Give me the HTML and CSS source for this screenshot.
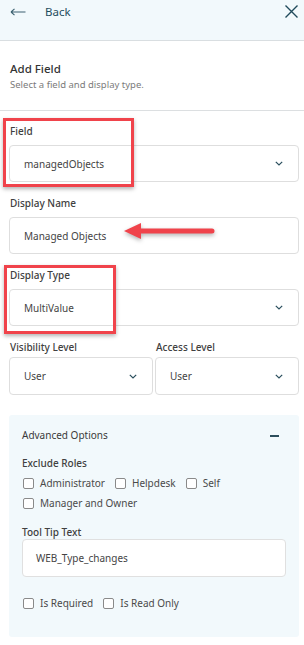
FILE: index.html
```html
<!DOCTYPE html>
<html>
<head>
<meta charset="utf-8">
<link rel="stylesheet" href="styles.css">
</head>
<body>
<div class="page">
  <header class="topbar">
    <div class="back">
      <svg class="back-arrow" width="16" height="10" viewBox="0 0 16 10"><path d="M1 5H15.5M1 5L4.5 1.8M1 5L4.5 8.2" fill="none" stroke="#3c6170" stroke-width="1.1"/></svg>
      <span class="back-text">Back</span>
    </div>
    <svg class="close" width="13" height="13" viewBox="0 0 13 13"><path d="M0.5 0.5L12.5 12.5M12.5 0.5L0.5 12.5" stroke="#1f4a5b" stroke-width="1.4"/></svg>
  </header>

  <section class="intro">
    <div class="title">Add Field</div>
    <div class="subtitle">Select a field and display type.</div>
  </section>

  <section class="form">
    <div class="group g-field">
      <div class="label">Field</div>
      <div class="control select"><span>managedObjects</span><svg class="chev" width="8" height="5" viewBox="0 0 8 5"><path d="M0.8 0.8L4 4L7.2 0.8" fill="none" stroke="#2b4f5e" stroke-width="1.2"/></svg></div>
    </div>
    <div class="group">
      <div class="label">Display Name</div>
      <div class="control"><span>Managed Objects</span></div>
    </div>
    <div class="group">
      <div class="label">Display Type</div>
      <div class="control select"><span>MultiValue</span><svg class="chev" width="8" height="5" viewBox="0 0 8 5"><path d="M0.8 0.8L4 4L7.2 0.8" fill="none" stroke="#2b4f5e" stroke-width="1.2"/></svg></div>
    </div>
    <div class="cols">
      <div class="group tight">
        <div class="label">Visibility Level</div>
        <div class="control select"><span>User</span><svg class="chev" width="8" height="5" viewBox="0 0 8 5"><path d="M0.8 0.8L4 4L7.2 0.8" fill="none" stroke="#2b4f5e" stroke-width="1.2"/></svg></div>
      </div>
      <div class="group tight">
        <div class="label">Access Level</div>
        <div class="control select"><span>User</span><svg class="chev" width="8" height="5" viewBox="0 0 8 5"><path d="M0.8 0.8L4 4L7.2 0.8" fill="none" stroke="#2b4f5e" stroke-width="1.2"/></svg></div>
      </div>
    </div>

    <div class="panel">
      <div class="panel-head">
        <span>Advanced Options</span>
        <span class="minus"></span>
      </div>
      <div class="label sub">Exclude Roles</div>
      <div class="checks">
        <label class="check"><span class="box"></span>Administrator</label>
        <label class="check"><span class="box"></span>Helpdesk</label>
        <label class="check"><span class="box"></span>Self</label>
      </div>
      <div class="checks">
        <label class="check"><span class="box"></span>Manager and Owner</label>
      </div>
      <div class="label sub tt">Tool Tip Text</div>
      <div class="control inner"><span>WEB_Type_changes</span></div>
      <div class="checks flags">
        <label class="check"><span class="box"></span>Is Required</label>
        <label class="check"><span class="box"></span>Is Read Only</label>
      </div>
    </div>
  </section>

  <div class="mark mark-field"></div>
  <div class="mark mark-type"></div>
  <svg class="arrow" width="100" height="22" viewBox="0 0 100 22"><path d="M2 11L19 3V8.5H90a2.5 2.5 0 0 1 0 5H19V19Z" fill="#f0434b"/></svg>
</div>
</body>
</html>
```
FILE: styles.css
```css
* { box-sizing: border-box; }
html, body { margin: 0; padding: 0; background: #fff; }
body {
  font-family: "Noto Sans", "Open Sans", sans-serif;
  color: #3a3a3a;
  width: 304px;
}
.page { position: relative; width: 304px; height: 645px; overflow: hidden; }

.topbar {
  height: 41px;
  background: #f2f9fc;
  border-bottom: 1px solid #d9dee1;
  display: flex;
  align-items: flex-start;
  justify-content: space-between;
  padding: 5px 6px 0 10px;
}
.back { display: flex; align-items: center; height: 13px; }
.back-arrow { display: block; margin-top: 1px; }
.back-text {
  margin-left: 19px;
  font-size: 11.5px;
  color: #1f4d60;
  line-height: 13px;
}
.close { display: block; margin-top: 0; }

.intro {
  height: 70px;
  border-bottom: 1px solid #dcdfe1;
  padding: 19px 10px 0 10px;
}
.title { font-size: 11.5px; font-weight: 500; color: #333; line-height: 17px; }
.subtitle { font-size: 9.5px; color: #7b7b7b; line-height: 13px; margin-top: 1px; }

.form { padding: 13px 5px 0 9px; }
.group { display: flex; flex-direction: column; margin-bottom: 14px; }
.label {
  font-size: 10px;
  font-weight: 500;
  color: #404040;
  line-height: 14px;
  margin-bottom: 7px;
  padding-left: 1px;
}
.control {
  height: 37px;
  border: 1px solid #dedede;
  border-radius: 4px;
  background: #fff;
  display: flex;
  align-items: center;
  justify-content: space-between;
  padding: 0 14px 0 14px;
  font-size: 10px;
  color: #444;
}
.chev { display: block; margin-right: 1px; }

.cols { display: grid; grid-template-columns: 1fr 1fr; column-gap: 2px; }
.group.tight { margin-bottom: 20px; }
.group.tight .label { margin-bottom: 3px; }
.group.tight .control { height: 38px; }

.panel {
  background: #f2f9fc;
  border-radius: 3px;
  height: 222px;
  padding: 13px 13px 0 13px;
}
.panel-head {
  display: flex;
  justify-content: space-between;
  align-items: center;
  font-size: 10px;
  color: #3a3a3a;
  line-height: 15px;
}
.minus { width: 9px; height: 2px; background: #2c4e5c; margin-right: 7px; }
.label.sub { margin-top: 13px; margin-bottom: 3px; padding-left: 0; }
.checks { display: flex; align-items: center; gap: 9px; height: 20px; }
.check {
  display: flex;
  align-items: center;
  font-size: 10px;
  color: #4a4a4a;
}
.box {
  width: 11px; height: 11px;
  border: 1px solid #8a8a8a;
  border-radius: 2px;
  background: #fff;
  margin-right: 6px;
  margin-left: 1px;
}
.label.tt { margin-top: 12px; margin-bottom: 0; }
.control.inner { height: 38px; border-color: #e0e0e0; padding-left: 13px; }
.checks.flags { margin-top: 16px; }

.mark {
  position: absolute;
  border: 3px solid #f0434b;
  box-shadow: 0 2px 4px rgba(0,0,0,0.3);
}
.mark-field { left: 3px; top: 118px; width: 131px; height: 69px; }
.mark-type { left: 4px; top: 265px; width: 112px; height: 69px; }
.arrow {
  position: absolute;
  left: 122px; top: 220px;
  filter: drop-shadow(0 2px 2px rgba(0,0,0,0.3));
}
```
